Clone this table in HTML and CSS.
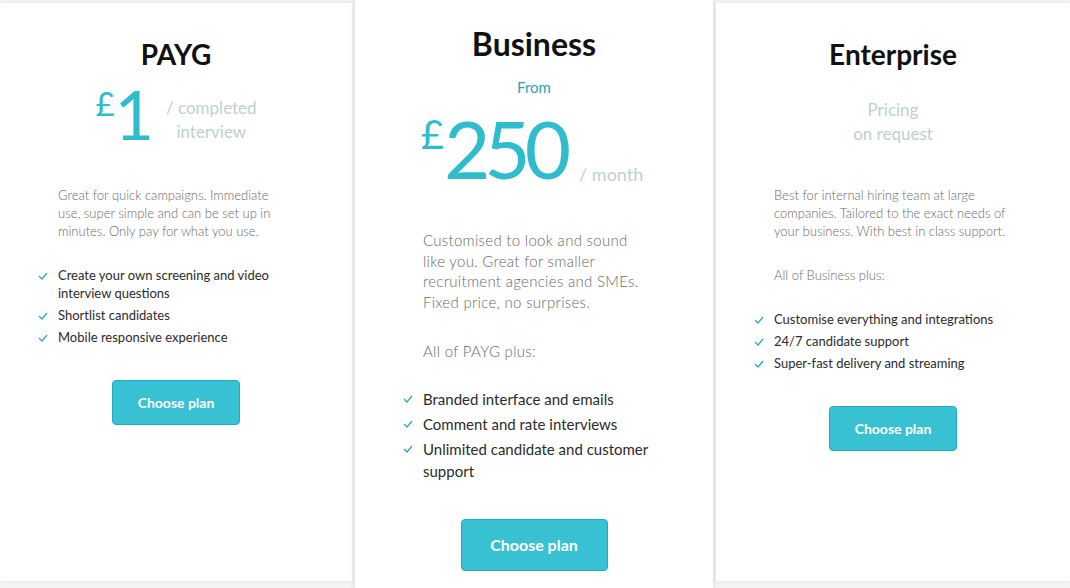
FILE: index.html
```html
<!DOCTYPE html>
<html>
<head>
    <title>Pricing</title>
    <link rel="stylesheet" href="styles.css">
</head>
<body>
    <div class="plans">
        <!-- PAYG -->
        <div class="plan">
            <h2 class="plan-title">PAYG</h2>
            <div class="price">
                <span class="currency">£</span>
                <span class="amount">1</span>
                <span class="per">/ completed<br>interview</span>
            </div>
            <p class="plan-desc">Great for quick campaigns. Immediate use, super simple and can be set up in minutes. Only pay for what you use.</p>
            <ul class="features">
                <li><svg class="tick" viewBox="0 0 10 8"><polyline points="1,4 4,7 9,1"/></svg>Create your own screening and video interview questions</li>
                <li><svg class="tick" viewBox="0 0 10 8"><polyline points="1,4 4,7 9,1"/></svg>Shortlist candidates</li>
                <li><svg class="tick" viewBox="0 0 10 8"><polyline points="1,4 4,7 9,1"/></svg>Mobile responsive experience</li>
            </ul>
            <a href="#" class="button">Choose plan</a>
        </div>

        <!-- Business (featured) -->
        <div class="plan plan-featured">
            <h2 class="plan-title">Business</h2>
            <div class="from">From</div>
            <div class="price">
                <span class="currency">£</span>
                <span class="amount">250</span>
                <span class="per">/ month</span>
            </div>
            <p class="plan-desc">Customised to look and sound like you. Great for smaller recruitment agencies and SMEs. Fixed price, no surprises.</p>
            <p class="plan-desc plan-includes">All of PAYG plus:</p>
            <ul class="features">
                <li><svg class="tick" viewBox="0 0 10 8"><polyline points="1,4 4,7 9,1"/></svg>Branded interface and emails</li>
                <li><svg class="tick" viewBox="0 0 10 8"><polyline points="1,4 4,7 9,1"/></svg>Comment and rate interviews</li>
                <li><svg class="tick" viewBox="0 0 10 8"><polyline points="1,4 4,7 9,1"/></svg>Unlimited candidate and customer support</li>
            </ul>
            <a href="#" class="button">Choose plan</a>
        </div>

        <!-- Enterprise -->
        <div class="plan">
            <h2 class="plan-title">Enterprise</h2>
            <div class="price price-request">
                <span class="per">Pricing<br>on request</span>
            </div>
            <p class="plan-desc">Best for internal hiring team at large companies. Tailored to the exact needs of your business. With best in class support.</p>
            <p class="plan-desc plan-includes">All of Business plus:</p>
            <ul class="features">
                <li><svg class="tick" viewBox="0 0 10 8"><polyline points="1,4 4,7 9,1"/></svg>Customise everything and integrations</li>
                <li><svg class="tick" viewBox="0 0 10 8"><polyline points="1,4 4,7 9,1"/></svg>24/7 candidate support</li>
                <li><svg class="tick" viewBox="0 0 10 8"><polyline points="1,4 4,7 9,1"/></svg>Super-fast delivery and streaming</li>
            </ul>
            <a href="#" class="button">Choose plan</a>
        </div>
    </div>
</body>
</html>
```

FILE: styles.css
```css
body {
    margin: 0;
    font-family: 'Lato', 'Noto Sans', sans-serif;
    background-color: #f4f4f4;
    color: #333;
    overflow: hidden;
}
.plans {
    display: grid;
    grid-template-columns: 352px 360px 354px;
    gap: 2px;
    align-items: start;
}
.plan {
    background-color: #fff;
    margin-top: 3px;
    height: 578px;
    padding: 34px 58px 0;
    box-sizing: border-box;
    box-shadow: 0 0 4px rgba(0, 0, 0, 0.08);
}
.plan-title {
    margin: 0;
    font-size: 28px;
    line-height: 34px;
    font-weight: 700;
    color: #111;
    text-align: center;
}
.price {
    display: flex;
    justify-content: center;
    align-items: flex-end;
    margin-top: 9px;
    color: #2fbccd;
    white-space: nowrap;
}
.currency {
    align-self: flex-start;
    font-size: 33px;
    line-height: 1;
    margin-top: 7px;
}
.amount {
    font-size: 68px;
    line-height: 1;
    font-weight: 400;
}
.per {
    font-size: 17px;
    line-height: 24px;
    color: #bcd3cb;
    text-align: center;
    margin-left: 12px;
    padding-bottom: 4px;
}
.price-request {
    margin-top: 27px;
    height: 48px;
}
.price-request .per {
    margin-left: 0;
    padding-bottom: 0;
}
.plan-desc {
    margin: 38px 0 0;
    font-size: 13px;
    line-height: 18px;
    font-weight: 300;
    color: #6a6a6a;
}
.plan-includes {
    margin-top: 26px;
}
.price-request + .plan-desc {
    margin-top: 40px;
}
.features {
    list-style: none;
    margin: 26px 0 0;
    padding: 0;
    font-size: 13px;
    line-height: 18px;
    color: #2b2b2b;
}
.features li {
    position: relative;
    margin-bottom: 4px;
}
.tick {
    position: absolute;
    left: -20px;
    top: 6px;
    width: 10px;
    height: 8px;
    fill: none;
    stroke: #2aa8b8;
    stroke-width: 1.2;
}
.button {
    display: block;
    width: 128px;
    height: 45px;
    box-sizing: border-box;
    margin: 34px auto 0;
    background-color: #38c1d2;
    border: 1px solid #22adbe;
    border-radius: 4px;
    color: #fff;
    font-size: 14px;
    font-weight: 700;
    line-height: 43px;
    text-align: center;
    text-decoration: none;
}

/* featured plan is taller and a touch larger */
.plan-featured {
    margin-top: 0;
    height: 600px;
    padding: 26px 60px 0;
    border-left: 1px solid #e6e6e6;
    border-right: 1px solid #e6e6e6;
    box-shadow: 0 0 6px rgba(0, 0, 0, 0.08);
}
.plan-featured .plan-title {
    font-size: 32px;
    line-height: 36px;
}
.from {
    margin-top: 15px;
    text-align: center;
    font-size: 15px;
    line-height: 20px;
    color: #2aa2b3;
}
.plan-featured .price {
    margin-top: 11px;
    margin-left: -4px;
}
.plan-featured .currency {
    font-size: 40px;
    margin-top: 6px;
}
.plan-featured .amount {
    font-size: 80px;
    letter-spacing: -6px;
}
.plan-featured .per {
    font-size: 18px;
    margin-left: 14px;
    padding-bottom: 2px;
}
.plan-featured .plan-desc {
    margin: 42px 6px 0 8px;
    font-size: 15px;
    line-height: 20.7px;
    letter-spacing: 0.3px;
}
.plan-featured .plan-includes {
    margin-top: 28px;
}
.plan-featured .features {
    margin-left: 8px;
    font-size: 15px;
    line-height: 22px;
}
.plan-featured .features li {
    margin-bottom: 3px;
}
.plan-featured .tick {
    top: 7px;
}
.plan-featured .button {
    width: 147px;
    height: 52px;
    line-height: 50px;
    font-size: 16px;
    margin-top: 37px;
}
```
